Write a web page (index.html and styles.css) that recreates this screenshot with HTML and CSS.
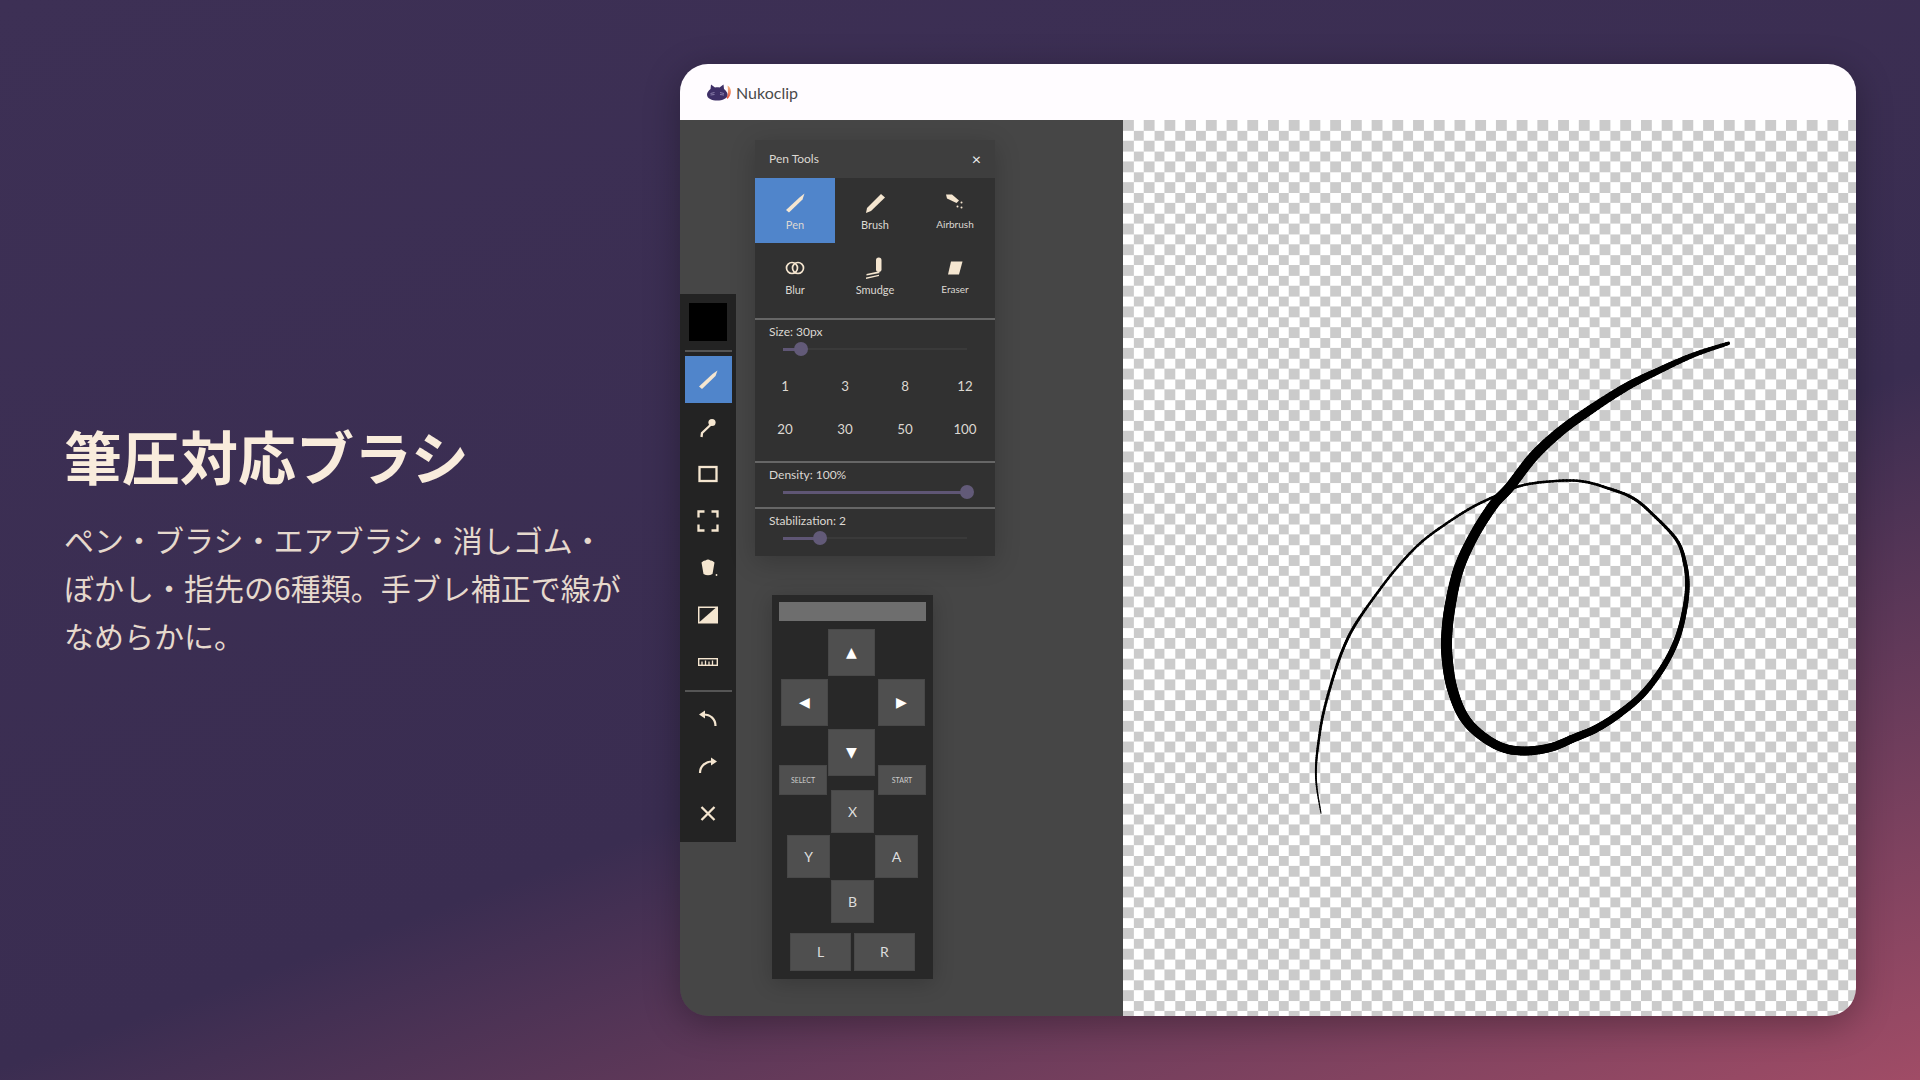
FILE: index.html
```html
<!DOCTYPE html>
<html lang="ja">
<head>
  <meta charset="UTF-8" />
  <title>Nukoclip</title>
  <link rel="stylesheet" href="styles.css">
</head>
<body>
  <main class="page">
    <section class="intro">
      <h1>筆圧対応ブラシ</h1>
      <p>ペン・ブラシ・エアブラシ・消しゴム・ぼかし・指先の6種類。手ブレ補正で線がなめらかに。</p>
    </section>

    <div class="window">
      <header class="titlebar">
        <svg class="logo" viewBox="0 0 24 17">
          <defs>
            <linearGradient id="tail" x1="0" y1="0" x2="0" y2="1">
              <stop offset="0" stop-color="#f8c08a"/>
              <stop offset="1" stop-color="#e8503a"/>
            </linearGradient>
          </defs>
          <path d="M19.5 13.5 C21.5 10.5 21 5 20.5 1.5 C25 3.5 25 11 20.5 15 Z" fill="url(#tail)"/>
          <path d="M3.5 5 L4 .5 L8 3.5 C9.5 3.2 11 3.2 12.5 3.5 L16.5 .5 L17 5 C19 6.8 20.5 8.5 20.5 10.5 C20.5 14.5 15.5 16.5 10.2 16.5 C5 16.5 0 14.5 0 10.5 C0 8.5 1.5 6.8 3.5 5 Z" fill="#3e2f66"/>
          <path d="M3.5 9.5 L7.5 8.5 M3.5 11 L7.5 10.5 M17 9.5 L13 8.5 M17 11 L13 10.5" stroke="#a79cc4" stroke-width=".7" fill="none"/>
        </svg>
        <span>Nukoclip</span>
      </header>

      <div class="app">
        <div class="workspace">
          <nav class="toolbar">
            <div class="swatch"></div>
            <hr class="tool-sep">
            <button class="tool active"><svg viewBox="0 0 24 24"><path class="fill" d="M3 18.5 L16.5 6 L21.5 2.5 L19.5 8 L6 21 Z"/></svg></button>
            <button class="tool"><svg viewBox="0 0 24 24"><circle class="fill" cx="16" cy="7.5" r="3.6"/><path class="line" d="M5.5 22 L6 18 L15 9.5"/></svg></button>
            <button class="tool"><svg viewBox="0 0 24 24"><rect class="line" x="3.5" y="5" width="17" height="14"/></svg></button>
            <button class="tool"><svg viewBox="0 0 24 24"><path class="line" d="M2.5 8.5 V2.5 H8.5 M15.5 2.5 H21.5 V8.5 M21.5 15.5 V21.5 H15.5 M8.5 21.5 H2.5 V15.5"/></svg></button>
            <button class="tool"><svg viewBox="0 0 24 24"><path class="fill" d="M5.5 6.5 Q8 4 9.5 4.5 Q12 2.5 14.5 4.5 Q16 4 18.5 6.5 L16.5 18 Q12 20.5 7.5 18 Z"/><circle class="fill" cx="20.5" cy="19" r=".9"/></svg></button>
            <button class="tool"><svg viewBox="0 0 24 24"><rect class="fill" x="2" y="3.5" width="20" height="17"/><path class="cut" d="M3.5 5 H19.5 L3.5 19 Z"/></svg></button>
            <button class="tool"><svg viewBox="0 0 24 24"><rect class="fill" x="2" y="8" width="20" height="8"/><rect class="cut" x="3.4" y="9.4" width="17.2" height="5.2"/><path class="tick" d="M6 11.5 V15 M9.5 10.5 V15 M13 11.5 V15 M16.5 10.5 V15"/></svg></button>
            <hr class="tool-sep low">
            <button class="tool"><svg viewBox="0 0 24 24"><path class="line thin" d="M19.5 19 C19.5 12 14.5 7.5 7.5 7.5"/><path class="fill" d="M3 7.5 L9 3.5 V11.5 Z"/></svg></button>
            <button class="tool"><svg viewBox="0 0 24 24"><path class="line thin" d="M4 19 C4 12 9.5 7.5 16.5 7.5"/><path class="fill" d="M21 7.5 L15 3.5 V11.5 Z"/></svg></button>
            <button class="tool"><svg viewBox="0 0 24 24"><path class="line" d="M5.5 6 L18.5 19 M18.5 6 L5.5 19"/></svg></button>
          </nav>

          <div class="pen-panel">
            <div class="panel-head">
              <span>Pen Tools</span>
              <span class="panel-close">×</span>
            </div>
            <div class="brush-grid">
              <button class="brush active"><svg viewBox="0 0 24 24"><path class="fill" d="M3 19 L16.5 6.5 L21.5 2.5 L19.5 8.5 L6 21.5 Z"/></svg>Pen</button>
              <button class="brush"><svg viewBox="0 0 24 24"><path class="fill" d="M3 22 L4 17 L18 3 L22 6.5 L8 20 Z"/></svg>Brush</button>
              <button class="brush small"><svg viewBox="0 0 24 24"><path class="fill" d="M3 3.5 H9 L16 9.5 L13.5 12 L4 7.5 Z"/><circle class="fill" cx="18.5" cy="11.5" r="1"/><circle class="fill" cx="14.5" cy="15.5" r="1"/><circle class="fill" cx="18.5" cy="16.5" r="1"/></svg>Airbrush</button>
              <button class="brush"><svg viewBox="0 0 24 24"><circle class="ring" cx="9" cy="12" r="5.5"/><circle class="ring" cx="15" cy="12" r="5.5"/></svg>Blur</button>
              <button class="brush"><svg viewBox="0 0 24 24"><rect class="fill" x="13" y="1.5" width="5.5" height="14.5" rx="2.7"/><path class="fill" d="M3.5 18 L15 15.5 L17 17 L3.5 19.5 Z M3 21.5 L16 18.8 L16 20 L3 23 Z"/></svg>Smudge</button>
              <button class="brush small"><svg viewBox="0 0 24 24"><path class="fill" d="M8 5.5 H19.5 L16 18.5 H5 Z"/></svg>Eraser</button>
            </div>

            <div class="setting">
              <div class="setting-label">Size: 30px</div>
              <div class="slider"><div class="slider-fill" style="width: 10%"></div></div>
              <div class="size-grid">
                <button>1</button><button>3</button><button>8</button><button>12</button>
                <button>20</button><button>30</button><button>50</button><button>100</button>
              </div>
            </div>
            <div class="setting">
              <div class="setting-label">Density: 100%</div>
              <div class="slider"><div class="slider-fill" style="width: 100%"></div></div>
            </div>
            <div class="setting last">
              <div class="setting-label">Stabilization: 2</div>
              <div class="slider"><div class="slider-fill" style="width: 20%"></div></div>
            </div>
          </div>

          <div class="gamepad">
            <div class="pad-screen"></div>
            <div class="dpad">
              <button class="pad-btn up">▲</button>
              <button class="pad-btn left">◀</button>
              <button class="pad-btn right">▶</button>
              <button class="pad-btn down">▼</button>
            </div>
            <div class="pad-meta">
              <button class="pad-btn">SELECT</button>
              <button class="pad-btn">START</button>
            </div>
            <div class="abxy">
              <button class="pad-btn x">X</button>
              <button class="pad-btn y">Y</button>
              <button class="pad-btn a">A</button>
              <button class="pad-btn b">B</button>
            </div>
            <div class="shoulders">
              <button class="pad-btn">L</button>
              <button class="pad-btn">R</button>
            </div>
          </div>
        </div>

        <canvas id="paper" class="paper" width="733" height="896"></canvas>
      </div>
    </div>
  </main>
  <script src="stroke.js"></script>
</body>
</html>
```

FILE: styles.css
```css
* {
  box-sizing: border-box;
}

body {
  margin: 0;
  width: 1920px;
  height: 1080px;
  overflow: hidden;
  background: linear-gradient(160deg, #3d3055 0%, #3a2d51 60%, #a04c66 100%);
  font-family: Lato, "Noto Sans", sans-serif;
}

button {
  font-family: inherit;
  border: none;
  padding: 0;
  background: none;
  color: inherit;
}

.page {
  height: 100%;
  display: flex;
  align-items: center;
  padding: 0 64px;
}

.intro {
  width: 616px;
  flex: none;
  font-family: "Noto Sans CJK JP", sans-serif;
  margin-top: -3px;
}

.intro h1 {
  margin: 0 0 21px;
  font-size: 58px;
  font-weight: 700;
  line-height: 1.3;
  color: #f9ecdc;
}

.intro p {
  margin: 0;
  width: 560px;
  font-size: 30px;
  line-height: 48px;
  color: #e6d9cd;
}

.window {
  width: 1176px;
  height: 952px;
  flex: none;
  display: flex;
  flex-direction: column;
  border-radius: 28px;
  overflow: hidden;
  box-shadow: 0 8px 36px rgba(0, 0, 0, 0.3);
}

.titlebar {
  height: 56px;
  flex: none;
  display: flex;
  align-items: center;
  gap: 5px;
  padding-left: 27px;
  background: #fffcff;
  color: #4a4a4a;
  font-size: 16px;
}

.logo {
  width: 24px;
  height: 17px;
}

.app {
  flex: 1;
  display: flex;
  min-height: 0;
}

.workspace {
  width: 443px;
  flex: none;
  position: relative;
  background: #464646;
}

.paper {
  display: block;
  flex: none;
  background: conic-gradient(#fff 25%, #cbcbcb 0 50%, #fff 0 75%, #cbcbcb 0) 0 0 / 20.72px 20.72px;
}

/* icons */
.fill {
  fill: #f5e6d0;
}

.cut {
  fill: #232323;
}

.line {
  fill: none;
  stroke: #f5e6d0;
  stroke-width: 2.3;
}

.line.thin {
  stroke-width: 2.2;
}

.ring {
  fill: none;
  stroke: #f5e6d0;
  stroke-width: 1.7;
}

.tick {
  fill: none;
  stroke: #f5e6d0;
  stroke-width: 1.3;
}

/* left toolbar */
.toolbar {
  position: absolute;
  left: 0;
  top: 174px;
  width: 56px;
  height: 548px;
  padding-top: 9px;
  display: flex;
  flex-direction: column;
  align-items: center;
  background: #232323;
}

.swatch {
  width: 38px;
  height: 38px;
  flex: none;
  background: #000;
}

.tool-sep {
  width: 47px;
  height: 2px;
  flex: none;
  margin: 9px 0 4px;
  border: none;
  background: #555;
}

.tool-sep.low {
  margin: 5px 0 3px;
}

.tool {
  width: 47px;
  height: 47px;
  flex: none;
  display: flex;
  align-items: center;
  justify-content: center;
}

.tool svg {
  width: 24px;
  height: 24px;
}

.tool.active {
  background: #5085cb;
}

/* pen tools panel */
.pen-panel {
  position: absolute;
  left: 75px;
  top: 20px;
  width: 240px;
  background: #313131;
  color: #dcd8d2;
  box-shadow: 0 6px 24px rgba(0, 0, 0, 0.2);
}

.panel-head {
  height: 38px;
  display: flex;
  align-items: center;
  justify-content: space-between;
  padding: 0 14px 2px;
  background: #3e3e3e;
  font-size: 12px;
}

.panel-close {
  font-size: 16px;
  color: #eee;
}

.brush-grid {
  display: grid;
  grid-template-columns: repeat(3, 80px);
  grid-auto-rows: 65px;
  padding-bottom: 10px;
  border-bottom: 2px solid #666;
  height: 142px;
}

.brush {
  display: flex;
  flex-direction: column;
  align-items: center;
  padding-top: 13px;
  font-size: 11px;
  line-height: 14px;
}

.brush svg {
  width: 24px;
  height: 24px;
  margin-bottom: 3px;
}

.brush.small {
  font-size: 10px;
  line-height: 12px;
}

.brush.active {
  background: #5085cb;
}

.setting {
  padding: 5px 0 8px 14px;
  border-bottom: 2px solid #666;
}

.setting.last {
  padding-bottom: 11px;
  border-bottom: none;
}

.setting-label {
  font-size: 12px;
  line-height: 13px;
}

.slider {
  width: 184px;
  height: 14px;
  margin: 4px 0 0 14px;
  position: relative;
  background: linear-gradient(#3a3a3a, #3a3a3a) 0 center / 100% 2px no-repeat;
}

.slider-fill {
  position: absolute;
  left: 0;
  top: 5.5px;
  height: 3px;
  background: #5f5675;
}

.slider-fill::after {
  content: "";
  position: absolute;
  right: -7px;
  top: -5.5px;
  width: 14px;
  height: 14px;
  border-radius: 50%;
  background: #625a78;
}

.size-grid {
  display: grid;
  grid-template-columns: repeat(4, 60px);
  grid-template-rows: 42px 43px;
  margin: 9px 0 3px -14px;
  font-size: 12px;
}

/* gamepad */
.gamepad {
  position: absolute;
  left: 92px;
  top: 475px;
  width: 161px;
  height: 384px;
  padding: 7px;
  display: flex;
  flex-direction: column;
  background: #282828;
  box-shadow: 0 4px 20px rgba(0, 0, 0, 0.2);
}

.pad-screen {
  height: 19px;
  flex: none;
  background: #6e6e6e;
}

.pad-btn {
  background: #4f4f4f;
  border: 1px solid #484848;
  color: #ddd;
  font-size: 14px;
  display: flex;
  align-items: center;
  justify-content: center;
}

.dpad {
  display: grid;
  grid-template-columns: 47px 50px 47px;
  grid-template-rows: 50px 50px 47px;
  margin: 8px 0 0 2px;
}

.dpad .pad-btn {
  width: 47px;
  height: 47px;
  padding-bottom: 2px;
  color: #fff;
  font-family: "DejaVu Sans", sans-serif;
  font-size: 14px;
}

.up {
  grid-column: 2;
  grid-row: 1;
}

.left {
  grid-column: 1;
  grid-row: 2;
}

.right {
  grid-column: 3;
  grid-row: 2;
}

.down {
  grid-column: 2;
  grid-row: 3;
}

.pad-meta {
  display: flex;
  justify-content: space-between;
  margin-top: -11px;
}

.pad-meta .pad-btn {
  width: 48px;
  height: 30px;
  font-size: 7px;
  color: #ccc;
}

.abxy {
  display: grid;
  grid-template-columns: repeat(3, 43px);
  grid-auto-rows: 43px;
  gap: 2px 1px;
  margin: -5px 0 0 8px;
}

.x {
  grid-column: 2;
  grid-row: 1;
}

.y {
  grid-column: 1;
  grid-row: 2;
}

.a {
  grid-column: 3;
  grid-row: 2;
}

.b {
  grid-column: 2;
  grid-row: 3;
}

.shoulders {
  display: flex;
  gap: 3px;
  margin: 10px 0 0 11px;
}

.shoulders .pad-btn {
  width: 61px;
  height: 38px;
  padding-bottom: 2px;
}
```

FILE: stroke.js
```js
// the pen stroke on the paper: x, y (in 1/3 px from 1280,320) and line width
const points = [
  [123,1480,1],[110,1400,1.6],[108,1340,2],[115,1270,2.4],[130,1180,2.6],[160,1070,2.8],
  [190,985,2.8],[225,915,2.8],[280,835,2.6],[345,750,2.5],[420,670,2.5],[500,610,2.5],[580,560,2.5],
  [660,522,2.6],[720,498,2.5],[800,485,2.5],[900,483,2.5],[985,505,2.8],[1060,535,3],[1120,585,3],
  [1190,660,3.2],[1215,730,4],[1222,800,4.6],[1212,880,5],[1190,960,5.6],[1150,1040,6],
  [1090,1120,6.6],[1020,1180,7],[950,1225,7.5],[880,1255,8],[810,1283,8.5],[730,1293,9],
  [660,1280,9],[590,1235,9.5],[545,1180,10],[515,1100,10.5],[502,1020,11],[500,950,11],[510,860,11],
  [535,750,10.5],[580,650,10],[640,555,10],[690,500,10],[760,410,10],[840,335,9.5],[930,270,9],
  [1040,200,8],[1140,150,6.5],[1240,105,5],[1345,70,3.5]
];

const ctx = document.getElementById('paper').getContext('2d');
ctx.strokeStyle = '#000';
ctx.lineCap = 'round';

function spline(a, b, c, d, t) {
  return 0.5 * (2 * b + (c - a) * t + (2 * a - 5 * b + 4 * c - d) * t * t + (3 * b - a - 3 * c + d) * t * t * t);
}

const px = p => [157 + p[0] / 3, 200 + p[1] / 3, p[2]];
const pts = points.map(px);

for (let i = 0; i < pts.length - 1; i++) {
  const p0 = pts[Math.max(i - 1, 0)];
  const p1 = pts[i];
  const p2 = pts[i + 1];
  const p3 = pts[Math.min(i + 2, pts.length - 1)];
  let last = [p1[0], p1[1]];
  for (let s = 1; s <= 10; s++) {
    const t = s / 10;
    const x = spline(p0[0], p1[0], p2[0], p3[0], t);
    const y = spline(p0[1], p1[1], p2[1], p3[1], t);
    ctx.lineWidth = p1[2] + (p2[2] - p1[2]) * t;
    ctx.beginPath();
    ctx.moveTo(last[0], last[1]);
    ctx.lineTo(x, y);
    ctx.stroke();
    last = [x, y];
  }
}
```
